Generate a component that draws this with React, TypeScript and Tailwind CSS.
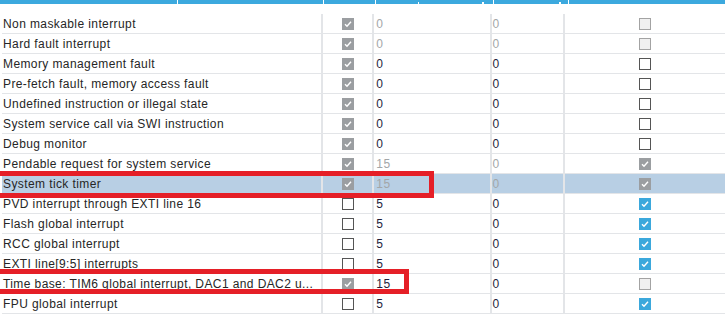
import React from "react";

type Box = "gc" | "gu" | "u" | "bc";
type Row = {
  name: string;
  c2: Box;
  p: string;
  pg: boolean;
  s: string;
  sg: boolean;
  c5: Box;
  sel?: boolean;
};

const rows: Row[] = [
  { name: "Non maskable interrupt", c2: "gc", p: "0", pg: true, s: "0", sg: true, c5: "gu" },
  { name: "Hard fault interrupt", c2: "gc", p: "0", pg: true, s: "0", sg: true, c5: "gu" },
  { name: "Memory management fault", c2: "gc", p: "0", pg: false, s: "0", sg: false, c5: "u" },
  { name: "Pre-fetch fault, memory access fault", c2: "gc", p: "0", pg: false, s: "0", sg: false, c5: "u" },
  { name: "Undefined instruction or illegal state", c2: "gc", p: "0", pg: false, s: "0", sg: false, c5: "u" },
  { name: "System service call via SWI instruction", c2: "gc", p: "0", pg: false, s: "0", sg: false, c5: "u" },
  { name: "Debug monitor", c2: "gc", p: "0", pg: false, s: "0", sg: false, c5: "u" },
  { name: "Pendable request for system service", c2: "gc", p: "15", pg: true, s: "0", sg: true, c5: "gc" },
  { name: "System tick timer", c2: "gc", p: "15", pg: true, s: "0", sg: true, c5: "gc", sel: true },
  { name: "PVD interrupt through EXTI line 16", c2: "u", p: "5", pg: false, s: "0", sg: false, c5: "bc" },
  { name: "Flash global interrupt", c2: "u", p: "5", pg: false, s: "0", sg: false, c5: "bc" },
  { name: "RCC global interrupt", c2: "u", p: "5", pg: false, s: "0", sg: false, c5: "bc" },
  { name: "EXTI line[9:5] interrupts", c2: "u", p: "5", pg: false, s: "0", sg: false, c5: "bc" },
  { name: "Time base: TIM6 global interrupt, DAC1 and DAC2 u...", c2: "gc", p: "15", pg: false, s: "0", sg: false, c5: "gu" },
  { name: "FPU global interrupt", c2: "u", p: "5", pg: false, s: "0", sg: false, c5: "bc" },
];

function Check({ t }: { t: Box }) {
  if (t === "gu")
    return <div className="w-[12px] h-[12px] border border-[#a3a3a3] bg-[#f0f0f0]" />;
  if (t === "u")
    return <div className="w-[12px] h-[12px] border border-[#555555] bg-white" />;
  const bg = t === "gc" ? "bg-[#9b9ea1]" : "bg-[#3ba8dc]";
  return (
    <div className={`w-[12px] h-[12px] ${bg} flex items-center justify-center`}>
      <svg width="10" height="10" viewBox="0 0 10 10">
        <path d="M2 5.2 L4 7.2 L8 2.8" stroke="white" strokeWidth="1.4" fill="none" />
      </svg>
    </div>
  );
}

export default function App() {
  return (
    <div
      className="relative w-[725px] h-[322px] overflow-hidden bg-white text-[12px] text-[#262626]"
      style={{ fontFamily: '"Liberation Sans", Arial, sans-serif' }}
    >
      {/* header strip */}
      <div className="relative flex h-[4px] gap-[1px] bg-white">
        <div className="w-[323px] bg-[#3ca9de]" />
        <div className="w-[51px] bg-[#3ca9de]" />
        <div className="w-[117px] bg-[#3ca9de]" />
        <div className="w-[74px] bg-[#3ca9de]" />
        <div className="flex-1 bg-[#3ca9de]" />
        <span className="absolute left-[177px] top-0 w-[1px] h-[4px] bg-white" />
        <span className="absolute left-[418px] top-[2px] w-[1px] h-[2px] bg-white" />
        <span className="absolute left-[482px] top-[2px] w-[2px] h-[2px] bg-white" />
        <span className="absolute left-[559px] top-[2px] w-[2px] h-[2px] bg-white" />
      </div>
      <div className="h-[10px]" />
      <div className="flex flex-col pl-[2px]">
        {rows.map((r, i) => (
          <div
            key={i}
            className={`flex h-[20px] border-b border-[#e3e5e8] ${r.sel ? "bg-[#b8cfe4]" : ""}`}
          >
            <div className="w-[321px] flex items-center pl-[1px] pt-[1px] tracking-[0.4px] whitespace-nowrap overflow-hidden">
              {r.name}
            </div>
            <div className="w-[52px] border-l-2 border-[#e3e5e8] flex items-center justify-center">
              <Check t={r.c2} />
            </div>
            <div
              className={`w-[118px] border-l-2 border-[#e3e5e8] flex items-center pl-[2px] pt-[1px] tracking-[0.4px] ${
                r.pg ? "text-[#a3a6a8]" : "text-[#1e1e3c]"
              }`}
            >
              {r.p}
            </div>
            <div
              className={`w-[74px] border-l-2 border-[#e3e5e8] flex items-center pl-[1px] pt-[1px] ${
                r.sg ? "text-[#a3a6a8]" : "text-[#1e1e3c]"
              }`}
            >
              {r.s}
            </div>
            <div className="w-[162px] shrink-0 border-l-2 border-[#e3e5e8] flex items-center justify-center">
              <Check t={r.c5} />
            </div>
          </div>
        ))}
      </div>
      {/* red annotation boxes */}
      <div className="absolute left-[-10px] top-[171px] w-[444px] h-[27px] border-[5px] border-[#e51f27]" />
      <div className="absolute left-[-10px] top-[269px] w-[419px] h-[25px] border-[5px] border-[#e51f27]" />
    </div>
  );
}
